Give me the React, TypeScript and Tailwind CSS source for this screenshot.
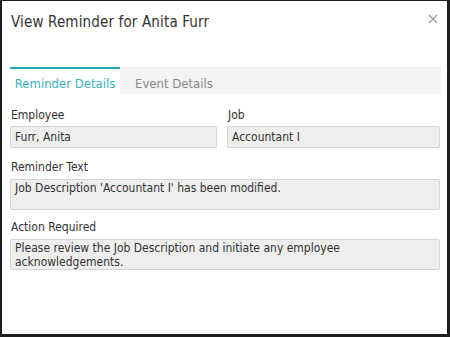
import React from "react"

const font = { fontFamily: "Tahoma, 'DejaVu Sans Condensed', 'DejaVu Sans', sans-serif" }

function Field({ label, value, tall }: { label: string; value: string; tall?: boolean }) {
  return (
    <div>
      <div className="text-[12px] leading-[16px] text-[#333] pl-[1px]">{label}</div>
      <div
        className={
          tall
            ? "mt-[4px] h-[31px] rounded-[2px] border border-[#d4d4d4] bg-[#eeeeee] px-[4px] pt-[1px] text-[12px] leading-[14px] text-[#333]"
            : "mt-[3px] h-[22px] rounded-[2px] border border-[#d4d4d4] bg-[#eeeeee] px-[4px] text-[12px] leading-[20px] text-[#333]"
        }
      >
        {value}
      </div>
    </div>
  )
}

export default function App() {
  return (
    <div
      className="w-[450px] h-[337px] bg-white border-t border-l-2 border-r-[3px] border-b-[3px] border-[#1e1e1e] pl-[8px] pr-[6px]"
      style={font}
    >
      <div className="flex items-start justify-between pt-[11px]">
        <div className="text-[15px] leading-[20px] tracking-[0.15px] text-[#333] pl-[1px]">
          View Reminder for Anita Furr
        </div>
        <svg width="10" height="10" viewBox="0 0 10 10" className="mt-[2px] mr-[3px]">
          <path d="M1 1 L9 9 M9 1 L1 9" stroke="#999" strokeWidth="1.1" />
        </svg>
      </div>

      <div className="mt-[35px] flex h-[27px] bg-[#f3f3f3] text-[13px]">
        <div className="w-[110px] border-t-2 border-[#22a9b8] bg-white pt-[5px] text-center text-[#3ab1c0]">
          Reminder Details
        </div>
        <div className="pl-[15px] pt-[7px] text-[#888]">Event Details</div>
      </div>

      <div className="mt-[13px] grid grid-cols-[207px_213px] gap-x-[10px]">
        <Field label="Employee" value="Furr, Anita" />
        <Field label="Job" value="Accountant I" />
      </div>

      <div className="mt-[11px] w-[430px]">
        <Field label="Reminder Text" value="Job Description 'Accountant I' has been modified." tall />
      </div>

      <div className="mt-[9px] w-[430px]">
        <Field
          label="Action Required"
          value="Please review the Job Description and initiate any employee acknowledgements."
          tall
        />
      </div>
    </div>
  )
}
